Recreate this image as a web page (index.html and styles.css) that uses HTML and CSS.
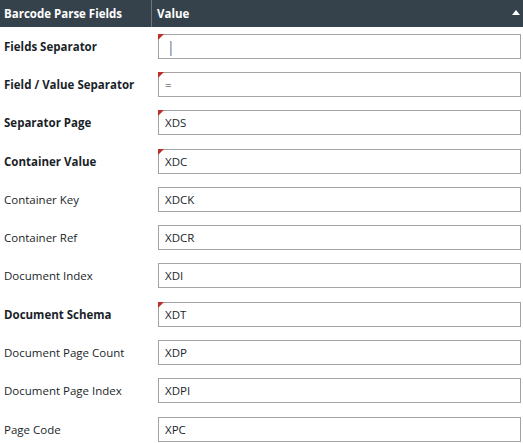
FILE: index.html
```html
<!DOCTYPE html>
<html lang="en">
<head>
  <meta charset="UTF-8" />
  <title>Barcode Parse Fields</title>
  <link rel="stylesheet" href="styles.css">
</head>
<body>

  <div class="grid">
    <div class="grid-head">
      <div class="head-cell name-col">Barcode Parse Fields</div>
      <div class="head-cell value-col">
        Value
        <span class="sort-arrow"></span>
      </div>
    </div>

    <div class="grid-body">
      <div class="row required">
        <label class="field-name">Fields Separator</label>
        <div class="field-value"><input type="text" class="pipe" value="|"></div>
      </div>
      <div class="row required">
        <label class="field-name">Field / Value Separator</label>
        <div class="field-value"><input type="text" value="="></div>
      </div>
      <div class="row required">
        <label class="field-name">Separator Page</label>
        <div class="field-value"><input type="text" value="XDS"></div>
      </div>
      <div class="row required">
        <label class="field-name">Container Value</label>
        <div class="field-value"><input type="text" value="XDC"></div>
      </div>
      <div class="row">
        <label class="field-name">Container Key</label>
        <div class="field-value"><input type="text" value="XDCK"></div>
      </div>
      <div class="row">
        <label class="field-name">Container Ref</label>
        <div class="field-value"><input type="text" value="XDCR"></div>
      </div>
      <div class="row">
        <label class="field-name">Document Index</label>
        <div class="field-value"><input type="text" value="XDI"></div>
      </div>
      <div class="row required">
        <label class="field-name">Document Schema</label>
        <div class="field-value"><input type="text" value="XDT"></div>
      </div>
      <div class="row">
        <label class="field-name">Document Page Count</label>
        <div class="field-value"><input type="text" value="XDP"></div>
      </div>
      <div class="row">
        <label class="field-name">Document Page Index</label>
        <div class="field-value"><input type="text" value="XDPI"></div>
      </div>
      <div class="row">
        <label class="field-name">Page Code</label>
        <div class="field-value"><input type="text" value="XPC"></div>
      </div>
    </div>
  </div>

</body>
</html>
```

FILE: styles.css
```css
:root {
  --header-bg: #36424b;
  --header-divider: #6b767e;
  --text: #1b1f2a;
  --input-border: #a3a3a3;
  --required: #c0302a;
}

body {
  margin: 0;
  font-family: 'Open Sans', 'Noto Sans', sans-serif;
  font-size: 11.5px;
  color: var(--text);
  background: #fff;
}

.grid {
  width: 523px;
}

/* Header bar */
.grid-head {
  display: grid;
  grid-template-columns: 152px 1fr;
  height: 27px;
  background: var(--header-bg);
  color: #fff;
  font-weight: 700;
}

.head-cell {
  display: flex;
  align-items: center;
  padding: 0 5px;
  padding-bottom: 1px;
}

.name-col {
  border-right: 1px solid var(--header-divider);
  padding-left: 4px;
}

.value-col {
  position: relative;
}

.sort-arrow {
  position: absolute;
  right: 3px;
  top: 10px;
  width: 0;
  height: 0;
  border-left: 4px solid transparent;
  border-right: 4px solid transparent;
  border-bottom: 5px solid #fff;
}

/* Field rows */
.grid-body {
  display: grid;
  grid-auto-rows: 38.3px;
}

.row {
  display: grid;
  grid-template-columns: 158px 363px;
  align-items: center;
}

.field-name {
  padding-left: 4px;
}

.row.required .field-name {
  font-weight: 700;
}

.field-value {
  position: relative;
}

.field-value input {
  display: block;
  box-sizing: border-box;
  width: 363px;
  height: 25px;
  margin: 0;
  padding: 0 6px;
  border: 1px solid var(--input-border);
  border-radius: 0;
  font-family: inherit;
  font-size: 11.5px;
  color: var(--text);
  background: #fff;
  outline: none;
}

.field-value input.pipe {
  font-size: 14px;
  color: #5a6f8c;
  padding-left: 8px;
}

/* Red corner flag on required inputs */
.row.required .field-value::before {
  content: "";
  position: absolute;
  top: 0;
  left: 0;
  width: 0;
  height: 0;
  border-top: 6px solid var(--required);
  border-right: 6px solid transparent;
}
```
